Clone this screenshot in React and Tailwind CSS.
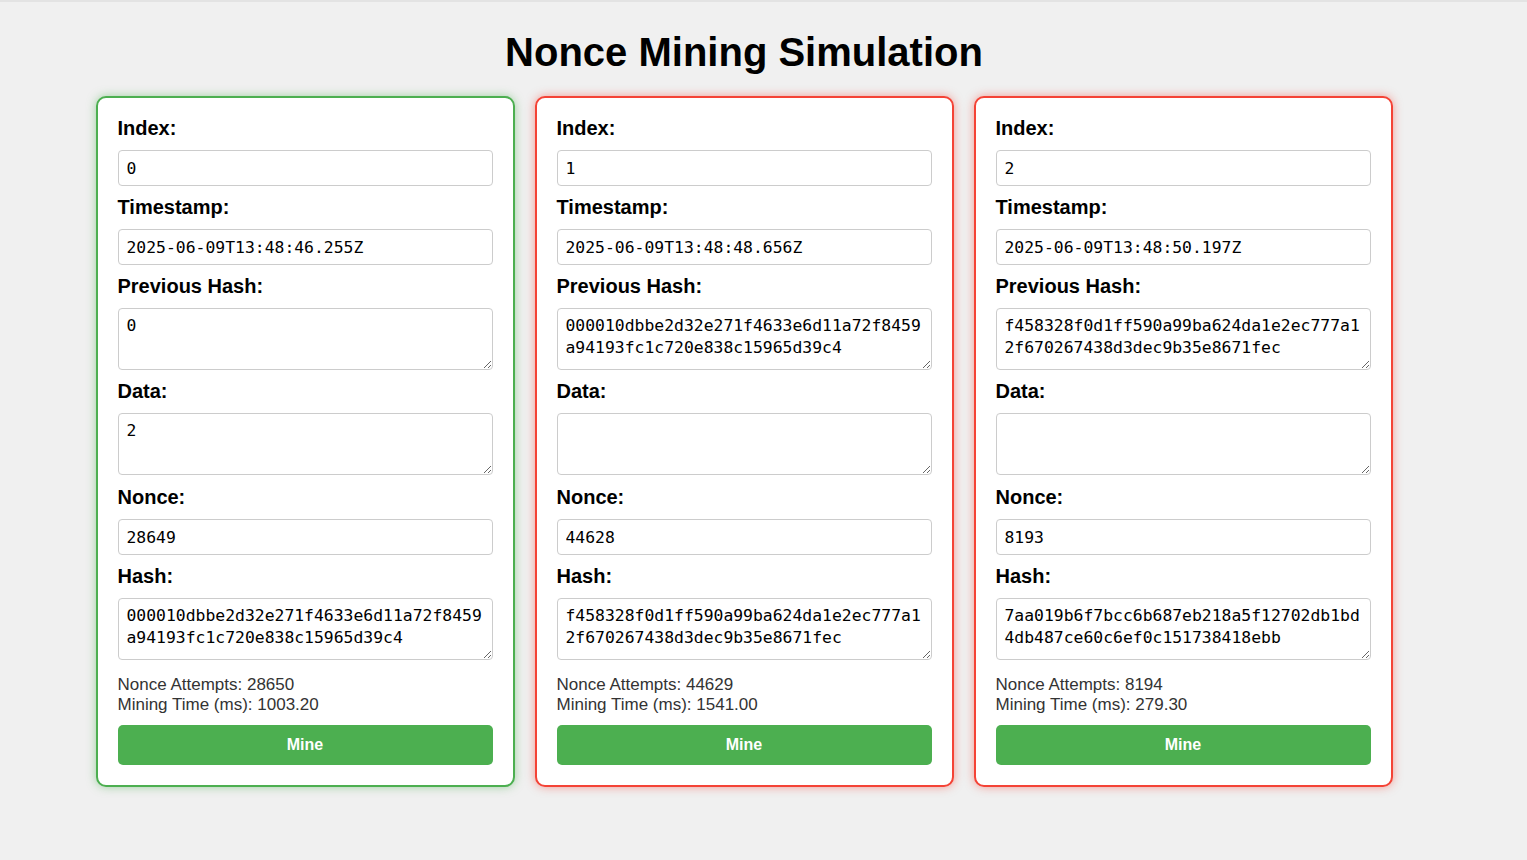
import React from 'react';

const blocks = [
    {
        index: '0',
        timestamp: '2025-06-09T13:48:46.255Z',
        prevHash: '0',
        data: '2',
        nonce: '28649',
        hash: '000010dbbe2d32e271f4633e6d11a72f8459a94193fc1c720e838c15965d39c4',
        attempts: '28650',
        time: '1003.20',
        valid: true,
    },
    {
        index: '1',
        timestamp: '2025-06-09T13:48:48.656Z',
        prevHash: '000010dbbe2d32e271f4633e6d11a72f8459a94193fc1c720e838c15965d39c4',
        data: '',
        nonce: '44628',
        hash: 'f458328f0d1ff590a99ba624da1e2ec777a12f670267438d3dec9b35e8671fec',
        attempts: '44629',
        time: '1541.00',
        valid: false,
    },
    {
        index: '2',
        timestamp: '2025-06-09T13:48:50.197Z',
        prevHash: 'f458328f0d1ff590a99ba624da1e2ec777a12f670267438d3dec9b35e8671fec',
        data: '',
        nonce: '8193',
        hash: '7aa019b6f7bcc6b687eb218a5f12702db1bd4db487ce60c6ef0c151738418ebb',
        attempts: '8194',
        time: '279.30',
        valid: false,
    },
];

const mono = "font-['DejaVu_Sans_Mono',monospace] text-[16.4px] text-black";
const fieldBase = `block w-full border border-[#ccc] rounded-[4px] bg-white px-2 outline-none ${mono}`;

const Label = ({ children }) => (
    <label className="block h-[23px] leading-[23px] text-[20px] font-bold text-black mb-[10px]">{children}</label>
);

const Field = ({ value }) => (
    <input readOnly value={value} className={`${fieldBase} h-[36px] leading-[22px] mb-[10px]`} />
);

// textareas: 62px tall, two lines of hash fit per box
const Area = ({ value, className = '' }) => (
    <textarea
        readOnly
        value={value}
        className={`${fieldBase} h-[62px] leading-[22px] py-[6px] break-all ${className}`}
    />
);

const BlockCard = ({ b }) => (
    <div
        className={
            'w-[419px] bg-white rounded-[10px] border-2 px-5 pt-[19px] pb-5 ' +
            (b.valid
                ? 'border-[#4caf50] shadow-[0_0_10px_rgba(76,175,80,0.5)]'
                : 'border-[#f44336] shadow-[0_0_10px_rgba(244,67,54,0.5)]')
        }
    >
        <Label>Index:</Label>
        <Field value={b.index} />
        <Label>Timestamp:</Label>
        <Field value={b.timestamp} />
        <Label>Previous Hash:</Label>
        <Area value={b.prevHash} className="mb-[10px]" />
        <Label>Data:</Label>
        <Area value={b.data} className="mb-[11px]" />
        <Label>Nonce:</Label>
        <Field value={b.nonce} />
        <Label>Hash:</Label>
        <Area value={b.hash} />
        <div className="mt-[15px] text-[17px] leading-[20px] text-[#333]">
            <div>Nonce Attempts: {b.attempts}</div>
            <div>Mining Time (ms): {b.time}</div>
        </div>
        <button className="mt-[10px] w-full h-[40px] rounded-[5px] bg-[#4caf50] text-white text-[16px] font-bold">
            Mine
        </button>
    </div>
);

export default function App() {
    return (
        <div className="min-h-screen bg-[#f0f0f0] border-t-2 border-[#e3e3e3] font-['Liberation_Sans',Arial,sans-serif]">
            <div className="w-[1488px] flex flex-col items-center">
                <h1 className="mt-[27px] text-[40px] leading-[46px] font-bold text-black">Nonce Mining Simulation</h1>
                <div className="mt-[21px] flex gap-5">
                    {blocks.map((b) => (
                        <BlockCard key={b.index} b={b} />
                    ))}
                </div>
            </div>
        </div>
    );
}
